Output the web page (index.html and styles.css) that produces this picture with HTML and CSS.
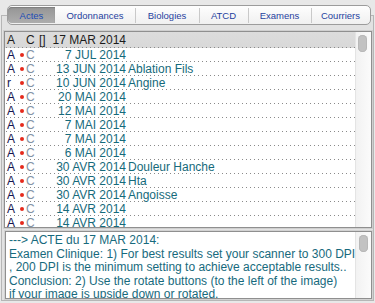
FILE: index.html
```html
<!DOCTYPE html>
<html lang="fr">
<head>
  <meta charset="UTF-8" />
  <meta name="viewport" content="width=device-width, initial-scale=1.0"/>
  <title>Dossier</title>
  <link rel="stylesheet" href="styles.css">
</head>
<body>
  <div class="frame">
    <div class="tabs">
      <div class="tab selected">Actes</div>
      <div class="tab">Ordonnances</div>
      <div class="tab">Biologies</div>
      <div class="tab">ATCD</div>
      <div class="tab">Examens</div>
      <div class="tab">Courriers</div>
    </div>

    <div class="list">
      <div class="rows">
        <div class="row head">
          <span class="col-a">A</span><span></span><span class="col-c">C</span><span class="col-box">[]</span><span class="col-date">17 MAR 2014</span><span></span>
        </div>
        <div class="row"><span class="col-a">A</span><span class="dot"></span><span class="col-c">C</span><span></span><span class="col-date">7 JUL 2014</span><span class="col-desc"></span></div>
        <div class="row"><span class="col-a">A</span><span class="dot"></span><span class="col-c">C</span><span></span><span class="col-date">13 JUN 2014</span><span class="col-desc">Ablation Fils</span></div>
        <div class="row"><span class="col-a">r</span><span class="dot"></span><span class="col-c">C</span><span></span><span class="col-date">10 JUN 2014</span><span class="col-desc">Angine</span></div>
        <div class="row"><span class="col-a">A</span><span class="dot"></span><span class="col-c">C</span><span></span><span class="col-date">20 MAI 2014</span><span class="col-desc"></span></div>
        <div class="row"><span class="col-a">A</span><span class="dot"></span><span class="col-c">C</span><span></span><span class="col-date">12 MAI 2014</span><span class="col-desc"></span></div>
        <div class="row"><span class="col-a">A</span><span class="dot"></span><span class="col-c">C</span><span></span><span class="col-date">7 MAI 2014</span><span class="col-desc"></span></div>
        <div class="row"><span class="col-a">A</span><span class="dot"></span><span class="col-c">C</span><span></span><span class="col-date">7 MAI 2014</span><span class="col-desc"></span></div>
        <div class="row"><span class="col-a">A</span><span class="dot"></span><span class="col-c">C</span><span></span><span class="col-date">6 MAI 2014</span><span class="col-desc"></span></div>
        <div class="row"><span class="col-a">A</span><span class="dot"></span><span class="col-c">C</span><span></span><span class="col-date">30 AVR 2014</span><span class="col-desc">Douleur Hanche</span></div>
        <div class="row"><span class="col-a">A</span><span class="dot"></span><span class="col-c">C</span><span></span><span class="col-date">30 AVR 2014</span><span class="col-desc">Hta</span></div>
        <div class="row"><span class="col-a">A</span><span class="dot"></span><span class="col-c">C</span><span></span><span class="col-date">30 AVR 2014</span><span class="col-desc">Angoisse</span></div>
        <div class="row"><span class="col-a">A</span><span class="dot"></span><span class="col-c">C</span><span></span><span class="col-date">14 AVR 2014</span><span class="col-desc"></span></div>
        <div class="row"><span class="col-a">A</span><span class="dot"></span><span class="col-c">C</span><span></span><span class="col-date">14 AVR 2014</span><span class="col-desc"></span></div>
      </div>
      <div class="scroll"><div class="thumb"></div></div>
    </div>

    <div class="note">
      <div class="note-text">
        <div>---&gt; ACTE du 17 MAR 2014:</div>
        <div>Examen Clinique: 1) For best results set your scanner to 300 DPI</div>
        <div>, 200 DPI is the minimum setting to achieve acceptable results..</div>
        <div>Conclusion: 2) Use the rotate buttons (to the left of the image)</div>
        <div>if your image is upside down or rotated.</div>
      </div>
      <div class="scroll"><div class="thumb"></div></div>
    </div>
  </div>
</body>
</html>
```

FILE: styles.css
```css
body {
  margin: 0;
  height: 303px;
  overflow: hidden;
  background: #e8e8e8;
  font-family: "Liberation Sans", Arial, sans-serif;
  font-size: 12px;
}
.frame {
  margin: 15px 1px 0;
  height: 284px;
  border: 1px solid #b6b6b6;
  background: #e2e2e2;
  padding: 0 1px;
}

/* tab bar */
.tabs {
  display: grid;
  grid-template-columns: 47px 80px 64px 49px 63px 1fr;
  height: 18px;
  margin: -11px 1px 0 4px;
  border: 1px solid #9c9c9c;
  border-radius: 5px;
  background: linear-gradient(#fefefe, #f0f0f0);
  font-size: 9.5px;
}
.tab {
  text-align: center;
  line-height: 19px;
  color: #1f3f9e;
  background: linear-gradient(#c9c9c9, #c9c9c9) left center / 1px 15px no-repeat;
}
.tab:first-child,
.tab.selected + .tab {
  background: none;
}
.tab.selected {
  margin: 1px 0 0 0;
  height: 16px;
  line-height: 17px;
  border-radius: 4px 0 0 4px;
  background: linear-gradient(#959595, #adadad);
  box-shadow: inset 0 1px 1px #7e7e7e;
  color: #1b4bb4;
}

/* list of acts */
.list {
  display: flex;
  height: 195px;
  margin: 6px 0 0 1px;
  border: 1px solid #8f8f8f;
  box-shadow: 0 0 0 1px #cfcfcf;
  background: #fff;
  overflow: hidden;
}
.rows {
  flex: 1;
  overflow: hidden;
}
.row {
  display: grid;
  grid-template-columns: 12px 7px 13px 9px 78px 1fr;
  height: 14px;
  line-height: 14px;
  padding-left: 2px;
  white-space: nowrap;
  background: linear-gradient(to right, #8a8a8a 1px, transparent 1px) 1px 100% / 4px 1px repeat-x;
}
.row.head {
  height: 16px;
  line-height: 16px;
  color: #1c1c1c;
  background:
    linear-gradient(to right, #8a8a8a 1px, transparent 1px) 1px 100% / 4px 1px repeat-x,
    linear-gradient(#dcdcdc, #d8d8d8);
}
.col-a {
  color: #14144f;
}
.row.head .col-a,
.row.head .col-c {
  color: #1c1c1c;
}
.col-c {
  color: #8393a6;
}
.dot {
  align-self: center;
  width: 4px;
  height: 4px;
  margin-left: 1px;
  border-radius: 50%;
  background: #e52a1c;
}
.col-date {
  text-align: right;
  color: #156a7b;
}
.row.head .col-date {
  color: #1c1c1c;
}
.col-desc {
  padding-left: 2px;
  color: #156a7b;
}

/* scrollbars */
.scroll {
  width: 15px;
  flex: none;
  border-left: 1px solid #e4e4e4;
  background: linear-gradient(to right, #f2f2f2, #fbfbfb);
}
.thumb {
  width: 9px;
  height: 17px;
  margin: 3px 0 0 2px;
  border-radius: 5px;
  background: #c2c2c2;
  box-shadow: inset 0 0 0 1px #b8b8b8;
}

/* note text */
.note {
  display: flex;
  height: 66px;
  margin: 3px 0 0 2px;
  border: 1px solid #8f8f8f;
  box-shadow: 0 0 0 1px #d2d2d2;
  background: #fff;
  overflow: hidden;
}
.note-text {
  flex: 1;
  padding: 2px 0 0 3px;
  line-height: 13.5px;
  color: #176a7d;
  white-space: nowrap;
  overflow: hidden;
}
.note .thumb {
  margin-left: 3px;
}
```
